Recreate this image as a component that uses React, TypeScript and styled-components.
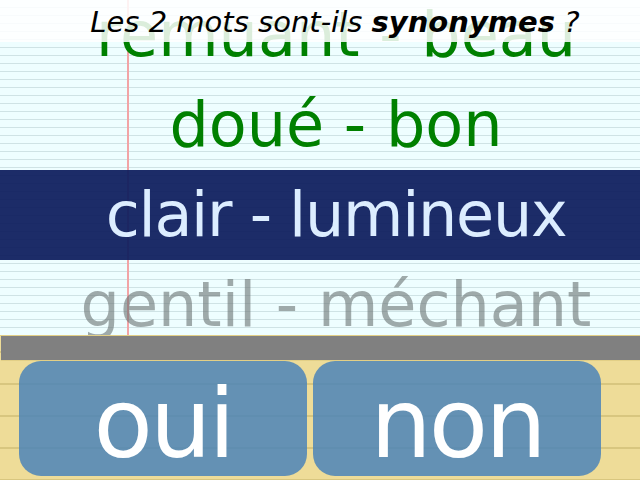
import React from 'react';
import styled, { createGlobalStyle } from 'styled-components';

const GlobalStyle = createGlobalStyle`
  html, body {
    margin: 0;
    padding: 0;
    overflow: hidden;
    background: #ffffff;
  }
`;

const Screen = styled.div`
  width: 640px;
  height: 480px;
  display: flex;
  flex-direction: column;
  font-family: 'DejaVu Sans', 'Liberation Sans', sans-serif;
`;

const Paper = styled.div`
  position: relative;
  height: 335px;
  flex-shrink: 0;
  overflow: hidden;
  background:
    linear-gradient(to right, transparent 127px, #f2a4a6 127px, #f2a4a6 129px, transparent 129px),
    repeating-linear-gradient(to bottom, transparent 0, transparent 7px, #cfe3e5 7px, #cfe3e5 9px, transparent 9px, transparent 8px),
    #eefeff;
  background-size: 100% 100%, 100% 8px, auto;
`;

const Header = styled.div`
  position: absolute;
  top: 0;
  left: 0;
  right: 0;
  height: 42px;
  box-sizing: border-box;
  padding: 2px 0 0 30px;
  background: rgba(255, 255, 255, 0.86);
  font-size: 29px;
  line-height: 40px;
  font-style: italic;
  color: #000000;
  text-align: center;
  white-space: nowrap;
  z-index: 1;
`;

const Strong = styled.b`
  font-weight: 700;
`;

const WordList = styled.div`
  display: flex;
  flex-direction: column;
  margin-top: -10px;
`;

type Tone = 'done' | 'current' | 'next';

const WordRow = styled.div<{ $tone: Tone }>`
  height: 90px;
  flex-shrink: 0;
  display: flex;
  align-items: center;
  justify-content: center;
  padding-left: 32px;
  box-sizing: border-box;
  font-size: 62px;
  line-height: 88px;
  white-space: nowrap;
  letter-spacing: ${(p) => (p.$tone === 'current' ? '-1.3px' : '0')};
  background: ${(p) => (p.$tone === 'current' ? 'rgba(12, 28, 92, 0.93)' : 'transparent')};
  color: ${(p) =>
    p.$tone === 'done'
      ? '#008000'
      : p.$tone === 'current'
      ? '#dcedff'
      : 'rgba(105, 114, 114, 0.6)'};
`;

const Footer = styled.div`
  flex: 1;
  display: flex;
  flex-direction: column;
  border-top: 1px solid #e2cf86;
  background:
    repeating-linear-gradient(to bottom, transparent 0, transparent 15px, #d8c67f 15px, #d8c67f 17px, transparent 17px, transparent 32px),
    #eedc98;
`;

const ProgressBar = styled.div`
  height: 24px;
  margin-left: 1px;
  background: #808080;
  border-bottom: 1px solid #e2cf86;
`;

const Buttons = styled.div`
  display: flex;
  gap: 6px;
  padding-left: 19px;
`;

const AnswerButton = styled.button`
  width: 288px;
  height: 115px;
  box-sizing: border-box;
  padding: 10px 0 0;
  border: none;
  border-radius: 22px;
  background: rgba(75, 132, 185, 0.85);
  color: #ffffff;
  font-family: 'DejaVu Sans', 'Liberation Sans', sans-serif;
  font-size: 97px;
  line-height: 105px;
  letter-spacing: -3px;
  text-align: center;
  cursor: pointer;
`;

const words: { text: string; tone: Tone }[] = [
  { text: 'remuant - beau', tone: 'done' },
  { text: 'doué - bon', tone: 'done' },
  { text: 'clair - lumineux', tone: 'current' },
  { text: 'gentil - méchant', tone: 'next' },
];

const App: React.FC = () => {
  return (
    <>
      <GlobalStyle />
      <Screen>
        <Paper>
          <Header>
            Les 2 mots sont-ils <Strong>synonymes</Strong> ?
          </Header>
          <WordList>
            {words.map((w) => (
              <WordRow key={w.text} $tone={w.tone}>
                {w.text}
              </WordRow>
            ))}
          </WordList>
        </Paper>
        <Footer>
          <ProgressBar />
          <Buttons>
            <AnswerButton>oui</AnswerButton>
            <AnswerButton>non</AnswerButton>
          </Buttons>
        </Footer>
      </Screen>
    </>
  );
};

export default App;
